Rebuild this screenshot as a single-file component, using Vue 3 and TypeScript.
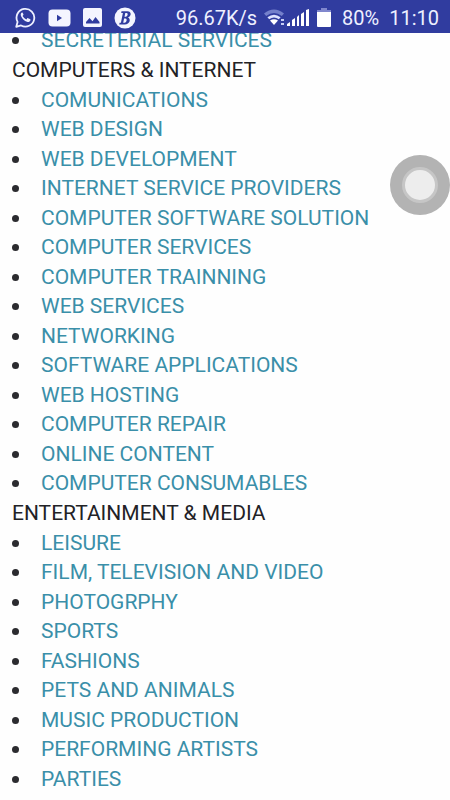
<script setup lang="ts">
interface Category {
  title: string
  items: string[]
}

const categories: Category[] = [
  { title: '', items: ['SECRETERIAL SERVICES'] },
  {
    title: 'COMPUTERS & INTERNET',
    items: [
      'COMUNICATIONS',
      'WEB DESIGN',
      'WEB DEVELOPMENT',
      'INTERNET SERVICE PROVIDERS',
      'COMPUTER SOFTWARE SOLUTION',
      'COMPUTER SERVICES',
      'COMPUTER TRAINNING',
      'WEB SERVICES',
      'NETWORKING',
      'SOFTWARE APPLICATIONS',
      'WEB HOSTING',
      'COMPUTER REPAIR',
      'ONLINE CONTENT',
      'COMPUTER CONSUMABLES',
    ],
  },
  {
    title: 'ENTERTAINMENT & MEDIA',
    items: [
      'LEISURE',
      'FILM, TELEVISION AND VIDEO',
      'PHOTOGRPHY',
      'SPORTS',
      'FASHIONS',
      'PETS AND ANIMALS',
      'MUSIC PRODUCTION',
      'PERFORMING ARTISTS',
      'PARTIES',
    ],
  },
]
</script>

<template>
  <div class="screen">
    <header class="status">
      <div class="notifications">
        <svg width="21" height="21" viewBox="0 0 22 22">
          <path d="M1.3 20.7 2.7 15.6A9.3 9.3 0 1 1 6.3 19.3Z" fill="none" stroke="#eef0ff" stroke-width="1.9" stroke-linejoin="round" />
          <path d="M7.2 5.8C5.8 6.6 5.7 8.2 6.5 9.9c1.3 2.7 3.3 4.5 6 5.5 1.7.6 3.2 0 3.7-1.6.2-.7 0-.9-.6-1.2l-1.9-.9c-.5-.2-.7 0-1 .4l-.7.9c-1.9-.8-3.1-1.9-4-3.6l.7-1c.2-.3.2-.5.1-.8L8 6.1c-.2-.4-.4-.5-.8-.3Z" fill="#eef0ff" />
        </svg>
        <svg width="23" height="18" viewBox="0 0 23 18">
          <rect x="0.5" y="0.5" width="22" height="17" rx="4" fill="#f4f5ff" />
          <path d="M9 5.8v6.4L14 9Z" fill="#303c9f" />
        </svg>
        <svg width="19" height="19" viewBox="0 0 19 19">
          <rect width="19" height="19" rx="2" fill="#f4f5ff" />
          <path d="M3 15.5V14l3.5-4 3 3.2 3-4.2 4 5v1.5Z" fill="#303c9f" />
        </svg>
        <svg width="22" height="22" viewBox="0 0 22 22">
          <circle cx="11" cy="11" r="10.5" fill="#f4f5ff" />
          <path d="M7.5 4.3h6c4.200 0 4.200 5.200.3 6.200 3.500 1 2.200 7-3 7H5.200l.4-1.700h1.300l2-9.800H7.200ZM11.300 6.100l-.8 3.700h1.300c2 0 2.700-3.700.7-3.700ZM10.100 11.600l-.9 4.100h1.400c2.200 0 2.900-4.100.9-4.100Z" fill="#303c9f" fill-rule="evenodd" />
        </svg>
      </div>
      <div class="system">
        <span>96.67K/s</span>
        <svg class="signal" width="45" height="18" viewBox="0 0 45 18">
          <path d="M0 4.5Q10 -3.5 20 4.5L17.8 7Q10 1 2.2 7Z" fill="#7480cb" />
          <path d="M3.4 8.2Q10 3.2 16.6 8.2L14.8 10.3Q10 6.8 5.2 10.3Z" fill="#dfe3ff" />
          <path d="M6 11.5Q10 8.8 14 11.5L10 16Z" fill="#fff" />
          <path d="M17 10h3v2h-3zM17 14h3v2h-3z" fill="#c9cff5" />
          <path d="M23 17v-2l3-2v4zM28 17v-6l3-2v8zM33 17V8l2-2v11zM37 17V5l3-2v14zM42 17V1l3-1v17z" fill="#fff" />
        </svg>
        <svg class="battery" width="14" height="21" viewBox="0 0 14 21">
          <path d="M4 1h6v2h4v3H0V3h4z" fill="#8087cd" />
          <path d="M0 5h14v14a1 1 0 0 1-1 1H1a1 1 0 0 1-1-1z" fill="#fff" />
        </svg>
        <span class="percent">80%</span>
        <time>11:10</time>
      </div>
    </header>

    <main class="directory">
      <section v-for="category in categories" :key="category.title">
        <h2 v-if="category.title">{{ category.title }}</h2>
        <ul>
          <li v-for="item in category.items" :key="item">
            <a href="#">{{ item }}</a>
          </li>
        </ul>
      </section>
    </main>

    <button class="assist" type="button" aria-label="Assistive touch"><span></span></button>
  </div>
</template>

<style>
body {
  margin: 0;
  background: #fefefe;
}
</style>

<style scoped>
.screen {
  height: 100vh;
  overflow: hidden;
  font-family: Roboto, 'Liberation Sans', sans-serif;
}

.status {
  position: relative;
  z-index: 1;
  box-sizing: border-box;
  height: 33px;
  padding: 2px 11px 0 15px;
  display: flex;
  align-items: center;
  justify-content: space-between;
  background: #303c9f;
  color: #eef0ff;
  font-size: 20px;
  line-height: 24px;
}

.notifications,
.system {
  display: flex;
  align-items: center;
}

.notifications {
  gap: 12px;
}

.signal {
  margin-left: 7px;
}

.battery {
  margin-left: 8px;
}

.percent {
  margin-left: 11px;
}

time {
  margin-left: 10px;
}

.directory {
  margin-top: -8px;
  padding: 0 12px;
  font-size: 21px;
  color: #222226;
}

h2 {
  margin: 0;
  font-size: 21px;
  font-weight: 400;
  line-height: 30px;
}

ul {
  margin: 0;
  padding: 0;
  list-style: none;
}

li {
  display: flex;
  align-items: center;
  line-height: 30px;
}

li:nth-child(even) {
  line-height: 29px;
}

li::before {
  content: '';
  width: 7px;
  height: 7px;
  margin-right: 22px;
  border-radius: 50%;
  background: #2b2b2f;
}

a {
  color: #3a8fa9;
  text-decoration: none;
}

.assist {
  position: fixed;
  top: 155px;
  right: 0;
  width: 60px;
  height: 60px;
  padding: 0;
  display: grid;
  place-items: center;
  border: 0;
  border-radius: 50%;
  background: #b3b3b3;
}

.assist span {
  width: 30px;
  height: 30px;
  border: 3px solid #c6c6c6;
  border-radius: 50%;
  background: #ededed;
}
</style>
